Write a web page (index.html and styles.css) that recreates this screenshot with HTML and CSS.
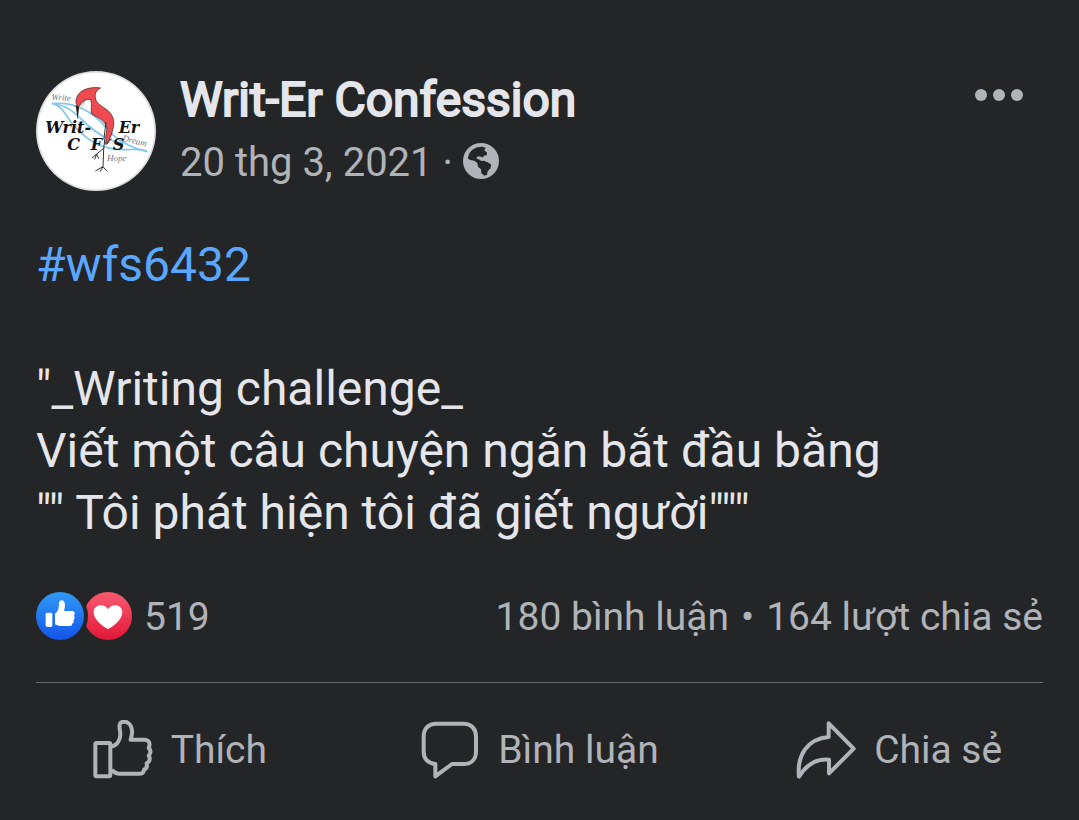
FILE: index.html
```html
<!DOCTYPE html>
<html lang="vi">
<head>
  <meta charset="UTF-8">
  <meta name="viewport" content="width=device-width, initial-scale=1.0">
  <title>Writ-Er Confession</title>
  <link rel="stylesheet" href="styles.css">
</head>
<body>
  <article class="post">
    <header class="post-header">
      <svg class="avatar" viewBox="30 27 360 360" role="img" aria-label="Writ-Er CFS">
        <circle cx="210" cy="207" r="180" fill="#dcdde0"/>
        <circle cx="210" cy="207" r="175" fill="#fff"/>
        <!-- feather -->
        <g fill="none" stroke="#82c8ea" stroke-width="5" stroke-linecap="round">
          <path d="M80 125C150 118 200 150 238 194C270 235 310 256 362 268"/>
          <path d="M80 125C112 130 122 172 152 200C190 240 230 262 290 263C320 264 340 258 362 268"/>
          <path d="M84 126C140 132 160 172 196 198C226 222 250 236 290 244"/>
        </g>
        <g class="avatar-note">
          <text x="76" y="113" transform="rotate(4 76 113)">Write</text>
          <text x="288" y="236" transform="rotate(14 288 236)">Dream</text>
          <text x="243" y="296">Hope</text>
        </g>
        <!-- bird -->
        <path d="M150 124C148 98 166 84 188 79C200 76 212 76 224 78C212 84 206 92 208 108C212 130 236 134 252 152C264 166 266 184 260 204C257 220 250 234 244 246C236 236 240 216 243 200C240 178 216 166 198 157C192 144 200 128 194 113C178 110 166 120 158 136Z" fill="#ee4a50" stroke="#2b2224" stroke-width="2"/>
        <path d="M149 128L159 136L155 174Z" fill="#1a1a1a"/>
        <path d="M158 136L178 116L166 138Z" fill="#fff" stroke="#555" stroke-width="1"/>
        <path d="M240 180L234 230L240 248L256 230M236 234L233 262L231 314M231 314L208 327M231 314L222 329M231 314L243 328M234 258L212 276M212 276L198 288M212 276L206 292M212 276L218 290" fill="none" stroke="#333" stroke-width="3"/>
        <g class="avatar-name">
          <text x="58" y="213">Writ-</text>
          <text x="278" y="213">Er</text>
          <text x="124" y="265">C</text>
          <text x="194" y="265">F</text>
          <text x="260" y="265">S</text>
        </g>
      </svg>
      <div class="post-info">
        <h1 class="page-name">Writ-Er Confession</h1>
        <div class="post-date">
          <time datetime="2021-03-20">20 thg 3, 2021</time>
          <span>·</span>
          <svg class="globe" viewBox="0 0 108 108" role="img" aria-label="Public">
            <circle cx="54" cy="54" r="54" fill="#b0b3b8"/>
            <path d="M16 40C20 20 40 10 58 11L68 14L64 22L72 29L71 37L62 38L60 44L54 41L46 40L40 44L43 48L51 50L54 54L62 53L74 58L85 65L82 76L74 85L72 95L64 98L55 91L54 79L45 71L43 60L34 53L22 51L15 47Z" fill="#242527"/>
          </svg>
        </div>
      </div>
      <button class="menu-button" type="button" aria-label="Menu">
        <svg viewBox="0 0 48 12"><circle cx="6" cy="6" r="6"/><circle cx="24" cy="6" r="6"/><circle cx="42" cy="6" r="6"/></svg>
      </button>
    </header>

    <div class="post-text">
      <p><a href="#wfs6432">#wfs6432</a></p>
      <p>"_Writing challenge_<br>
      Viết một câu chuyện ngắn bắt đầu bằng<br>
      "" Tôi phát hiện tôi đã giết người"""</p>
    </div>

    <div class="post-stats">
      <div class="reactions">
        <svg class="reaction-icons" viewBox="30 36 288 144" aria-hidden="true">
          <defs>
            <linearGradient id="like-fill" x1="0" y1="0" x2="0" y2="1">
              <stop offset="0" stop-color="#2f9bf7"/>
              <stop offset="1" stop-color="#1454e8"/>
            </linearGradient>
            <linearGradient id="love-fill" x1="0" y1="0" x2="0" y2="1">
              <stop offset="0" stop-color="#fa5a70"/>
              <stop offset="1" stop-color="#e21737"/>
            </linearGradient>
          </defs>
          <circle cx="246" cy="108" r="72" fill="url(#love-fill)"/>
          <circle cx="102" cy="108" r="84" fill="#242527"/>
          <circle cx="102" cy="108" r="72" fill="url(#like-fill)"/>
          <rect x="59" y="98" width="20" height="43" rx="5" fill="#fff"/>
          <path d="M87 101C96 94 99 86 99 68C100 58 116 57 117 74C117 82 115 88 114 93H138C148 93 148 104 143 107C148 111 146 118 142 120C145 126 142 130 138 131C139 137 134 138 129 138H104C96 138 92 135 87 133Z" fill="#fff"/>
          <path d="M246 148C228 138 203 118 203 97C203 72 235 69 246 87C257 69 289 72 289 97C289 118 264 138 246 148Z" fill="#fff"/>
        </svg>
        <span>519</span>
      </div>
      <div class="counts">
        <span>180 bình luận</span>
        <span>•</span>
        <span>164 lượt chia sẻ</span>
      </div>
    </div>

    <div class="post-actions">
      <button class="action" type="button">
        <svg viewBox="39 28 180 180" aria-hidden="true">
          <rect x="46" y="97" width="45" height="100" rx="4"/>
          <path d="M95 108C111 104 121 88 121 72C121 61 117 51 119 42C121 32 133 31 143 36C154 43 157 56 156 68C155 77 153 82 152 87H193C207 87 212 98 206 112C213 119 214 127 206 135C212 144 209 153 200 158C202 167 199 174 192 177C192 186 185 189 176 189H118C107 189 102 185 95 178"/>
        </svg>
        Thích
      </button>
      <button class="action" type="button">
        <svg viewBox="34 33 180 180" aria-hidden="true">
          <path d="M83 44H164C188 44 202 60 202 82V128C202 151 187 165 164 165H130L80 202V165C58 162 45 149 45 128V82C45 60 59 44 83 44Z"/>
        </svg>
        Bình luận
      </button>
      <button class="action" type="button">
        <svg viewBox="37 28 180 180" aria-hidden="true">
          <path d="M135 38L210 114L136 188V147C102 144 72 156 46 198C39 136 70 84 135 79Z"/>
        </svg>
        Chia sẻ
      </button>
    </div>
  </article>
</body>
</html>
```

FILE: styles.css
```css
* {
  box-sizing: border-box;
}
body {
  margin: 0;
  min-height: 100vh;
  background: #242527;
  color: #e4e6eb;
  font-family: Roboto, "Noto Sans", sans-serif;
}
.post {
  padding-top: 71px;
}
.post-header {
  display: flex;
  align-items: flex-start;
  gap: 24px;
  padding: 0 36px;
}
.avatar {
  flex: none;
  width: 120px;
  height: 120px;
}
.avatar-name {
  font: italic bold 48px "DejaVu Serif", serif;
  fill: #111;
}
.avatar-note {
  font: italic 27px "Liberation Serif", serif;
  fill: #777;
}
.post-info {
  flex: 1;
  display: flex;
  flex-direction: column;
  gap: 10px;
}
.page-name {
  margin: 0;
  font-size: 48px;
  line-height: 58px;
  font-weight: 400;
  -webkit-text-stroke: 2px #e4e6eb; /* bolder than regular, same width */
}
.post-date {
  display: flex;
  align-items: center;
  gap: 10px;
  font-size: 40px;
  line-height: 48px;
  color: #b0b3b8;
}
.globe {
  width: 36px;
  height: 36px;
  margin-bottom: 4px;
}
.menu-button {
  padding: 18px 20px;
  border: 0;
  background: none;
  cursor: pointer;
}
.menu-button svg {
  display: block;
  width: 48px;
  height: 12px;
  fill: #b0b3b8;
}
.post-text {
  padding: 43px 36px 0;
  font-size: 48px;
  line-height: 62px;
}
.post-text p {
  margin: 0 0 62px;
}
.post-text p:last-child {
  margin-bottom: 0;
}
.post-text a {
  color: #5aa7ff;
  text-decoration: none;
}
.post-stats {
  display: flex;
  justify-content: space-between;
  margin: 48px 36px 0;
  padding-bottom: 40px;
  border-bottom: 1px solid #67696c;
  font-size: 39px;
  line-height: 50px;
  color: #b0b3b8;
}
.reactions,
.counts {
  display: flex;
  gap: 12px;
}
.reaction-icons {
  width: 96px;
  height: 48px;
}
.post-actions {
  display: grid;
  grid-template-columns: repeat(3, 1fr);
}
.action {
  display: flex;
  align-items: center;
  justify-content: center;
  gap: 18px;
  padding: 37px 0;
  border: 0;
  background: none;
  color: #b0b3b8;
  font-family: inherit;
  font-size: 39px;
  line-height: 48px;
  cursor: pointer;
}
.action svg {
  width: 60px;
  height: 60px;
  fill: none;
  stroke: #b0b3b8;
  stroke-width: 12;
  stroke-linejoin: round;
}
```
